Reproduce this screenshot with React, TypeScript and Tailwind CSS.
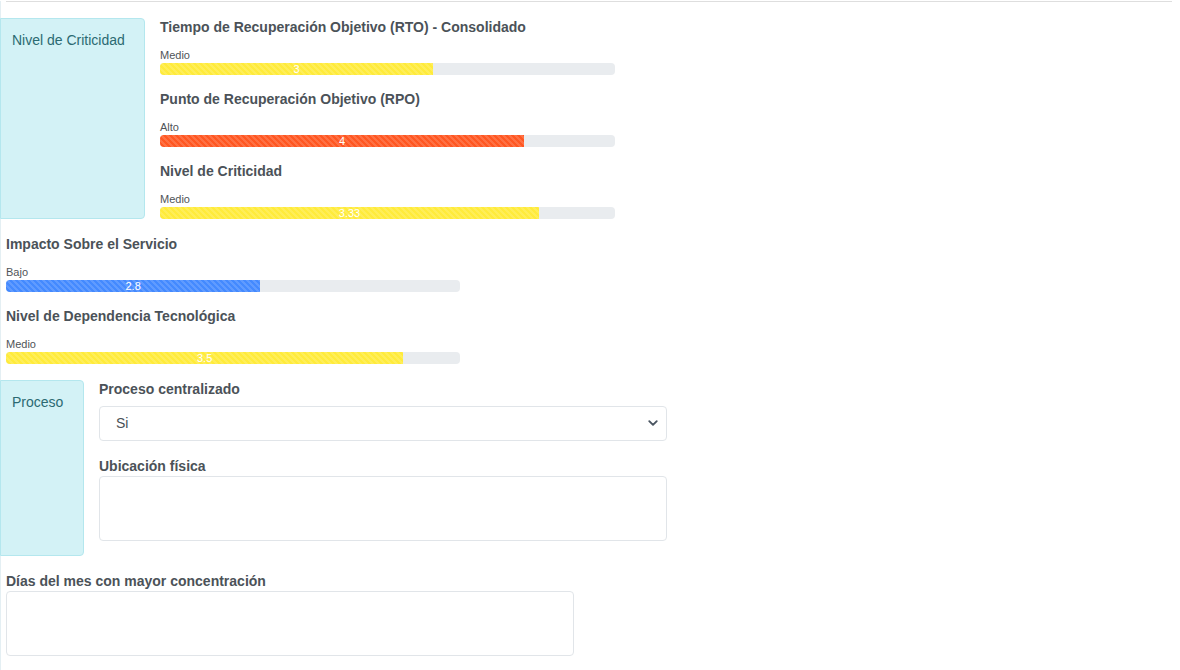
import React from 'react';

type Level = {
  title: string;
  label: string;
  value: string;
  pct: number;
  color: 'yellow' | 'orange' | 'blue';
};

const fillColors = {
  yellow: 'bg-[#ffeb3b]',
  orange: 'bg-[#ff5722]',
  blue: 'bg-[#448aff]',
};

const criticidad: Level[] = [
  { title: 'Tiempo de Recuperación Objetivo (RTO) - Consolidado', label: 'Medio', value: '3', pct: 60, color: 'yellow' },
  { title: 'Punto de Recuperación Objetivo (RPO)', label: 'Alto', value: '4', pct: 80, color: 'orange' },
  { title: 'Nivel de Criticidad', label: 'Medio', value: '3.33', pct: 83.3, color: 'yellow' },
];

const otros: Level[] = [
  { title: 'Impacto Sobre el Servicio', label: 'Bajo', value: '2.8', pct: 56, color: 'blue' },
  { title: 'Nivel de Dependencia Tecnológica', label: 'Medio', value: '3.5', pct: 87.5, color: 'yellow' },
];

// Barra de nivel con franjas
const LevelBar: React.FC<{ level: Level; width: string }> = ({ level, width }) => (
  <div className={`${width}`}>
    <h4 className="text-[14px] leading-[18px] font-bold text-[#4b5258]">{level.title}</h4>
    <div className="mt-[12px] text-[11px] leading-[14px] text-[#4f5458]">{level.label}</div>
    <div className="mt-px h-[12px] w-full rounded-[4px] bg-[#e9ecef] overflow-hidden flex">
      <div
        className={`h-full flex items-center justify-center text-white text-[11px] leading-[12px] bg-[image:linear-gradient(45deg,rgba(255,255,255,.15)_25%,transparent_25%,transparent_50%,rgba(255,255,255,.15)_50%,rgba(255,255,255,.15)_75%,transparent_75%,transparent)] bg-[length:6px_6px] ${fillColors[level.color]}`}
        style={{ width: `${level.pct}%` }}
      >
        {level.value}
      </div>
    </div>
  </div>
);

const SideTag: React.FC<{ text: string; className: string }> = ({ text, className }) => (
  <div
    className={`shrink-0 -ml-[6px] bg-[#d3f2f6] border border-[#b4e7ee] rounded-r-[4px] pl-[11px] pt-[11px] text-[14px] leading-[20px] text-[#2b6a72] ${className}`}
  >
    {text}
  </div>
);

export default function App() {
  return (
    <div
      className="min-h-screen w-full bg-white border-l border-[#e4eff3] pl-[5px]"
      style={{ fontFamily: '"Liberation Sans", Arial, sans-serif' }}
    >
      <div className="mt-px w-[1166px] border-t border-[#dedede]" />

      {/* Nivel de Criticidad */}
      <div className="mt-[16px] flex">
        <SideTag text="Nivel de Criticidad" className="w-[145px] h-[201px]" />
        <div className="ml-[15px] flex flex-col gap-[15px]">
          {criticidad.map((l) => (
            <LevelBar key={l.title} level={l} width="w-[455px]" />
          ))}
        </div>
      </div>

      <div className="mt-[16px] flex flex-col gap-[15px]">
        {otros.map((l) => (
          <LevelBar key={l.title} level={l} width="w-[454px]" />
        ))}
      </div>

      {/* Proceso */}
      <div className="mt-[16px] flex">
        <SideTag text="Proceso" className="w-[84px] h-[176px]" />
        <div className="ml-[15px] w-[568px]">
          <label className="block text-[14px] leading-[18px] font-bold text-[#4b5258]">Proceso centralizado</label>
          <div className="relative mt-[8px]">
            <select
              className="appearance-none w-full h-[35px] rounded-[4px] border border-[#e1e5e9] bg-white pl-[16px] text-[14px] text-[#495057] outline-none"
              defaultValue="Si"
            >
              <option>Si</option>
              <option>No</option>
            </select>
            <svg
              className="pointer-events-none absolute right-[8px] top-[12px]"
              width="12"
              height="10"
              viewBox="0 0 16 16"
              fill="none"
              stroke="#4a5561"
              strokeWidth="3"
              strokeLinecap="round"
              strokeLinejoin="round"
            >
              <path d="m2 5 6 6 6-6" />
            </svg>
          </div>
          <label className="mt-[16px] block text-[14px] leading-[18px] font-bold text-[#4b5258]">Ubicación física</label>
          <textarea className="mt-px block w-full h-[65px] rounded-[4px] border border-[#e1e5e9] resize-none outline-none" />
        </div>
      </div>

      <div className="mt-[16px] w-[568px]">
        <label className="block text-[14px] leading-[18px] font-bold text-[#4b5258]">Días del mes con mayor concentración</label>
        <textarea className="mt-px block w-full h-[65px] rounded-[4px] border border-[#e1e5e9] resize-none outline-none" />
      </div>
    </div>
  );
}
